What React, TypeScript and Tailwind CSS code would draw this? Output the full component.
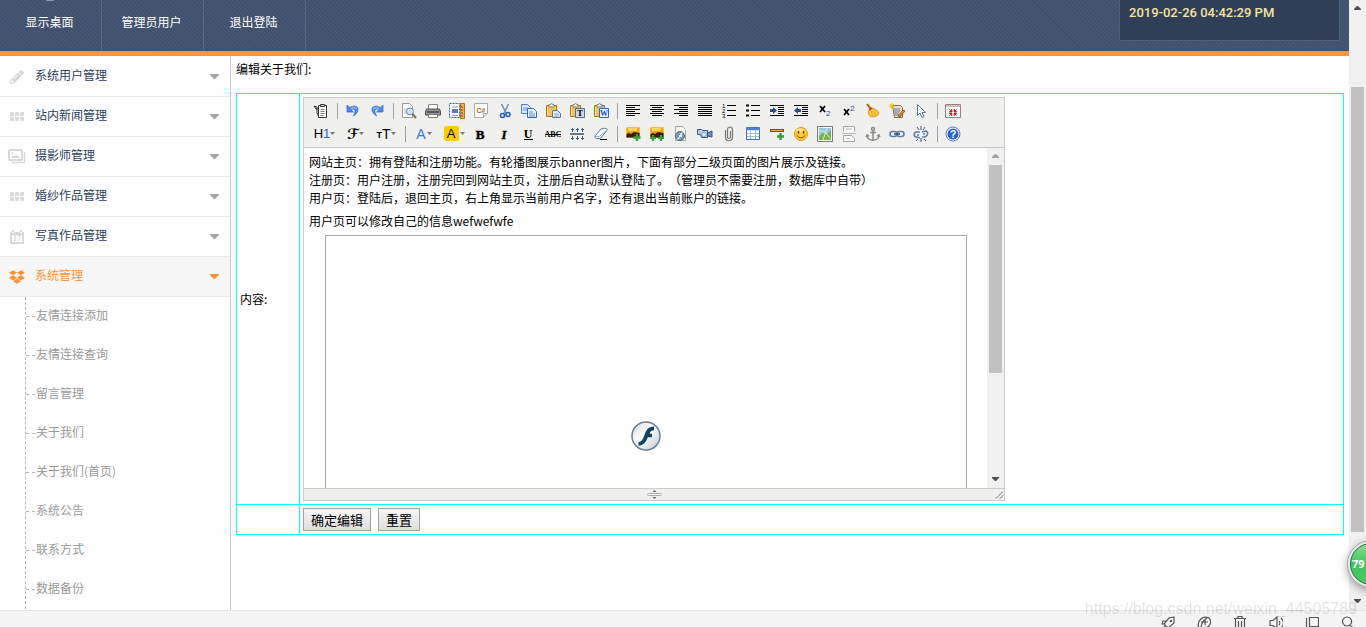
import React from 'react';
import clsx from 'clsx';
import { FaDropbox, FaPencilAlt } from 'react-icons/fa';

interface MenuItem {
  label: string;
  icon: React.ReactNode;
  active?: boolean;
}

interface ToolItem {
  name: string;
  label: string;
}

const gridIcon = (
  <svg width="14" height="10" viewBox="0 0 14 10" fill="currentColor">
    {[0, 5, 10].map((x) => (
      <React.Fragment key={x}>
        <rect x={x} y="0" width="4" height="4" rx="1" />
        <rect x={x} y="5" width="4" height="4" rx="1" />
      </React.Fragment>
    ))}
  </svg>
);

const photosIcon = (
  <svg width="18" height="15" viewBox="0 0 18 15" fill="none" stroke="currentColor" strokeWidth="2">
    <rect x="1" y="1" width="13" height="10" rx="1" />
    <path d="M16.5 3v10.5H4" strokeWidth="1.5" />
    <path d="M3 9l2-3 2 1 2-1 3 3z" fill="currentColor" stroke="none" />
    <circle cx="4.5" cy="4.2" r="1" fill="currentColor" stroke="none" />
  </svg>
);

const calendarIcon = (
  <svg width="14" height="14" viewBox="0 0 14 14">
    <path d="M0 2h2v1h2V2h6v1h2V2h2v12H0z" fill="currentColor" />
    <rect x="2" y="5" width="10" height="7" fill="#fff" />
    <path d="M3 0v2M11 0v2" stroke="currentColor" strokeWidth="2" />
    <text x="7" y="11" textAnchor="middle" fontSize="7" fontWeight="700" fill="currentColor">17</text>
  </svg>
);

const menu: MenuItem[] = [
  { label: '系统用户管理', icon: <FaPencilAlt size={14} /> },
  { label: '站内新闻管理', icon: gridIcon },
  { label: '摄影师管理', icon: photosIcon },
  { label: '婚纱作品管理', icon: gridIcon },
  { label: '写真作品管理', icon: calendarIcon },
  { label: '系统管理', icon: <FaDropbox size={16} />, active: true },
];

const subMenu = ['友情连接添加', '友情连接查询', '留言管理', '关于我们', '关于我们(首页)', '系统公告', '联系方式', '数据备份'];

const headerLinks = ['显示桌面', '管理员用户', '退出登陆'];

const lines = (rows: number[][]) => (
  <path d={rows.map(([y, x1, x2]) => `M${x1} ${y + 0.5}H${x2}`).join('')} stroke="#000" fill="none" />
);

const clipboard = (
  <>
    <path d="M1.5 2.5h10v11h-10z" fill="#f5c453" stroke="#a9791c" />
    <path d="M2.5 3.5v9" stroke="#ffe79a" />
    <path d="M4 3V1.5h1.5a1 1 0 0 1 2 0H9V4H4z" fill="#e8e8e8" stroke="#777" strokeWidth=".8" />
  </>
);

const photo = (
  <>
    <rect x="1" y="1" width="14" height="11" fill="#f6a01a" />
    <rect x="3" y="2" width="9" height="3" fill="#ffd65a" />
    <path d="M1 8l3-1 2 1 3-2 6 1v5H1z" fill="#3c1d00" />
    <rect x="1" y="1" width="14" height="11" fill="none" stroke="#fff3cf" strokeWidth=".7" />
  </>
);

const sheet = <path d="M2.5.5h7l3 3v11h-10z" fill="#fff" stroke="#a8a8a8" />;

const icons: Record<string, React.ReactNode> = {
  source: (
    <>
      <path d="M5.5 2.5h8v12h-8z" fill="#fff" stroke="#333" />
      <path d="M7.5 1.5h4v2h-4z" fill="#ddd" stroke="#333" />
      <path d="M7.5 6.5h4M7.5 8.5h4M7.5 10.5h4M7.5 12.5h3" stroke="#777" />
      <path d="M1 3l3 1v6l1.5 3M1 3l2 3h2" fill="none" stroke="#333" />
    </>
  ),
  undo: (
    <>
      <path d="M2 2v7h6.5L6 6.8c3-2 6 0 2.5 6.2C16 8 14 0 4.5 4.5z" fill="#4c88ee" stroke="#2a5fc4" strokeWidth=".7" />
      <path d="M6 5.5c3-1.3 5.5-.8 6.3 1" stroke="#a9c9ff" fill="none" />
    </>
  ),
  redo: (
    <>
      <path d="M14 2v7H7.5L10 6.8c-3-2-6 0-2.5 6.2C0 8 2 0 11.5 4.5z" fill="#4c8fee" stroke="#2a6cc4" strokeWidth=".7" />
      <path d="M10 5.5c-3-1.3-5.5-.8-6.3 1" stroke="#a9d0ff" fill="none" />
    </>
  ),
  preview: (
    <>
      <path d="M1.5.5h7l3 3v11h-10z" fill="#fff" stroke="#999" />
      <path d="M3 6h5M3 8h4M3 10h4" stroke="#c4c4c4" />
      <circle cx="9" cy="8.5" r="3.5" fill="#cfe3f5" stroke="#6b88aa" />
      <path d="M11.5 11l3.5 4" stroke="#8c7350" strokeWidth="2" />
    </>
  ),
  print: (
    <>
      <path d="M3.5 1.5h9v5h-9z" fill="#fff" stroke="#888" />
      <path d="M1.5 6h13l1 3v3h-15V9z" fill="#999" stroke="#4a4a4a" />
      <path d="M2 9h12" stroke="#444" strokeWidth="1.5" />
      <path d="M3.5 11.5h9v3h-9z" fill="#fff" stroke="#777" />
    </>
  ),
  template: (
    <>
      <path d="M.5.5h10v14H.5z" fill="#fff" stroke="#2b5fae" strokeDasharray="2 1" />
      <rect x="3" y="6" width="6" height="4" fill="#5b7fb5" />
      <path d="M3 4h6M3 12.5h6" stroke="#999" />
      <path d="M11.5.5h4v15h-4z" fill="#f0b040" stroke="#b0741a" />
      <path d="M12 4h2M12 7h2M12 10h2M12 13h2" stroke="#7a4d0c" />
    </>
  ),
  code: (
    <>
      <path d="M1.5.5h13v10l-4 4h-9z" fill="#fff" stroke="#aaa" />
      <path d="M14.5 10.5h-4v4" fill="#ddd" stroke="#aaa" />
      <text x="8" y="9.5" textAnchor="middle" fontSize="7" fontWeight="700" fill="#a8641c">C#</text>
    </>
  ),
  cut: (
    <>
      <path d="M4.5 1l4.5 9M11.5 1L7 10" stroke="#6f8fb5" strokeWidth="1.6" />
      <circle cx="5.5" cy="12.5" r="2" fill="none" stroke="#1f5fc0" strokeWidth="1.6" />
      <circle cx="11" cy="11.5" r="2" fill="none" stroke="#1f5fc0" strokeWidth="1.6" />
    </>
  ),
  copy: (
    <>
      <path d="M.5 1.5h6l3 3v6h-9z" fill="#dbe9fb" stroke="#4a80c8" />
      <path d="M2 5h5M2 7h5" stroke="#6c9bd8" />
      <path d="M6.5 5.5h6l3 3v6h-9z" fill="#e8f1fd" stroke="#2f6ab8" />
      <path d="M8 9h4M8 11h6M8 13h6" stroke="#5d8fd0" />
    </>
  ),
  paste: (
    <>
      {clipboard}
      <path d="M7.5 7.5h5l3 3v4h-8z" fill="#dde9f7" stroke="#5677a0" />
      <path d="M9 11h5M9 13h5" stroke="#8fa9c7" />
    </>
  ),
  plainpaste: (
    <>
      {clipboard}
      <path d="M6.5 5.5h9v9h-9z" fill="#cfdbe9" stroke="#5a6f8a" />
      <text x="11" y="13" textAnchor="middle" fontFamily="Liberation Serif" fontSize="9" fontWeight="700">T</text>
    </>
  ),
  wordpaste: (
    <>
      {clipboard}
      <path d="M6.5 5.5h9v9h-9z" fill="#eaf2fd" stroke="#3567ad" />
      <text x="11" y="13" textAnchor="middle" fontFamily="Liberation Serif" fontSize="8" fontWeight="700" fill="#1c4fa0">W</text>
    </>
  ),
  left: lines([[2, 1, 15], [4, 1, 10], [6, 1, 15], [8, 1, 10], [10, 1, 15], [12, 1, 10]]),
  center: lines([[2, 1, 15], [4, 3, 13], [6, 1, 15], [8, 3, 13], [10, 1, 15], [12, 3, 13]]),
  right: lines([[2, 1, 15], [4, 6, 15], [6, 1, 15], [8, 6, 15], [10, 1, 15], [12, 6, 15]]),
  full: lines([[2, 1, 15], [4, 1, 15], [6, 1, 15], [8, 1, 15], [10, 1, 15], [12, 1, 15]]),
  ordered: (
    <>
      {lines([[2, 6, 15], [7, 6, 15], [12, 6, 15]])}
      <g fontSize="6" fontFamily="Liberation Sans" fill="#000">
        <text x="1" y="5">1</text>
        <text x="1" y="10">2</text>
        <text x="1" y="15">3</text>
      </g>
    </>
  ),
  unordered: (
    <>
      {lines([[2, 6, 15], [7, 6, 15], [12, 6, 15]])}
      <path d="M1 1.5h3v2H1zM1 6.5h3v2H1zM1 11.5h3v2H1z" />
    </>
  ),
  indent: (
    <>
      {lines([[2, 1, 15], [4, 9, 15], [6, 9, 15], [8, 9, 15], [10, 9, 15], [12, 1, 15]])}
      <path d="M1 6h3V4l4 3.5L4 11V9H1z" fill="#294b86" />
    </>
  ),
  outdent: (
    <>
      {lines([[2, 1, 15], [4, 9, 15], [6, 9, 15], [8, 9, 15], [10, 9, 15], [12, 1, 15]])}
      <path d="M8 6H5V4L1 7.5 5 11V9h3z" fill="#294b86" />
    </>
  ),
  subscript: (
    <>
      <path d="M3 3l5 6M8 3L3 9" stroke="#000" strokeWidth="1.8" />
      <text x="9" y="13" fontSize="8" fontFamily="Liberation Sans" fill="#294b86">2</text>
    </>
  ),
  superscript: (
    <>
      <path d="M3 6l5 6M8 6l-5 6" stroke="#000" strokeWidth="1.8" />
      <text x="9" y="8" fontSize="8" fontFamily="Liberation Sans" fill="#294b86">2</text>
    </>
  ),
  clear: (
    <>
      <path d="M2 1l4 5" stroke="#a45a12" strokeWidth="2" />
      <path d="M4 7l3-2c4 1 6 3 7 5-1 3-4 4-8 4-3-2-3-5-2-7z" fill="#fbc736" stroke="#d18a10" strokeWidth=".8" />
      <path d="M4 7l3-2" stroke="#c02a10" strokeWidth="1.5" />
      <path d="M6 8l2 5M8 8l3 4" stroke="#dc9a1c" strokeWidth=".8" />
    </>
  ),
  quickformat: (
    <>
      <path d="M3.5 2.5h8l2 2v10h-8z" fill="#f3dfc0" stroke="#8b6a45" />
      <path d="M5 6h6M5 8h6M5 10h5M6 12h4" stroke="#5a79a8" />
      <path d="M3 0v6M0 3h6M1 1l4 4M5 1L1 5" stroke="#f5b800" />
      <path d="M9 13l5-6 2 1-5 6z" fill="#e28b2b" stroke="#713d12" strokeWidth=".7" />
    </>
  ),
  selectall: <path d="M4.5 1.5v11l2.5-2.500 2 4.500 2-1-2-4h3.500z" fill="#fff" stroke="#547399" />,
  fullscreen: (
    <>
      <path d="M.5 1.5h15v13H.5z" fill="#fff" stroke="#a08080" />
      <path d="M1 3h14" stroke="#c9bcbc" strokeWidth="2" />
      <path d="M4 6l3 3M7 6v3H4zM12 6L9 9M9 6v3h3zM4 13l3-3M4 10h3v3zM12 13l-3-3M12 10H9v3z" fill="#d4202a" stroke="#d4202a" strokeWidth=".6" />
    </>
  ),
  bold: <text x="7" y="13" textAnchor="middle" fontFamily="Liberation Serif" fontSize="13" fontWeight="700" stroke="#000" strokeWidth=".5">B</text>,
  italic: <text x="7" y="13" textAnchor="middle" fontFamily="Liberation Serif" fontSize="13" fontWeight="700" fontStyle="italic" stroke="#000" strokeWidth=".4">I</text>,
  underline: (
    <>
      <text x="7" y="12" textAnchor="middle" fontFamily="Liberation Serif" fontSize="12" fontWeight="700">U</text>
      <path d="M3 13.5h9" stroke="#000" />
    </>
  ),
  strike: (
    <>
      <text x="8" y="11" textAnchor="middle" fontFamily="Liberation Serif" fontSize="8" fontWeight="700">ABC</text>
      <path d="M0 8.5h16" stroke="#000" />
    </>
  ),
  lineheight: (
    <>
      <path d="M1 8h14" stroke="#777" strokeWidth="2" />
      <path d="M3.500 2v4M8.500 2v4M13.500 2v4M3.500 10v4M8.500 10v4M13.500 10v4M2 3.500h3M7 3.500h3M12 3.500h3M2 12.500h3M7 12.500h3M12 12.500h3" stroke="#3d5a80" />
    </>
  ),
  eraser: (
    <>
      <path d="M2 10l6-7c2-1 7-1 6 1l-6 8c-2 1-7 1-6-2z" fill="#fff" stroke="#54719b" />
      <path d="M2 10c2 1 4 1 6-1l6-5" fill="none" stroke="#8ca4c4" />
      <path d="M7 13.5h7" stroke="#000" />
    </>
  ),
  image: (
    <>
      {photo}
      <path d="M12 8v7M8.5 11.5h7" stroke="#2fa52f" strokeWidth="2.4" />
    </>
  ),
  multiimage: (
    <>
      {photo}
      <path d="M4 9v6M1 12h6M12 9v6M9 12h6" stroke="#2fa52f" strokeWidth="2.2" />
    </>
  ),
  flash: (
    <>
      {sheet}
      <circle cx="7" cy="10" r="4.5" fill="#7c99b8" stroke="#48698d" />
      <path d="M9.5 7C7 7 7 13 4.5 13M6 10h3" fill="none" stroke="#fff" strokeWidth="1.4" />
    </>
  ),
  media: (
    <>
      <path d="M.5 3.500h4l1 1h5v7h-6l-1-3h-3z" fill="#b9cde2" stroke="#34557f" />
      <path d="M10.500 7l4.500-2v6l-4.500-1z" fill="#6f90b8" stroke="#34557f" />
      <path d="M5 7h4v3H5z" fill="#fff" stroke="#5c7fa9" strokeWidth=".6" />
    </>
  ),
  file: <path d="M4.500 4v7c0 5 7 5 7 0V4c0-4-5-4-5 0v7c0 2 3 2 3 0V5" fill="none" stroke="#777" strokeWidth="1.2" />,
  table: (
    <>
      <path d="M1.5 1.5h13v12h-13z" fill="#fff" stroke="#3d6fc0" />
      <path d="M1 3h14" stroke="#4c80d6" strokeWidth="2.5" />
      <path d="M2 7.5h12M2 10.5h12M5.5 4v9M10.5 4v9" stroke="#9ebce8" />
    </>
  ),
  hr: (
    <>
      <path d="M1 4.5h14" stroke="#7b4a12" strokeWidth="3" />
      <path d="M2 4.5h12" stroke="#e9b15c" />
      <path d="M11.5 7v7M8 10.500h7" stroke="#2fa52f" strokeWidth="2.4" />
    </>
  ),
  emoticons: (
    <>
      <circle cx="8" cy="8" r="6.5" fill="#ffc928" stroke="#e89a10" />
      <ellipse cx="7" cy="4.5" rx="4" ry="2" fill="#ffe88a" />
      <path d="M5.5 5v2.5M10.5 5v2.5" stroke="#5a3200" strokeWidth="1.4" />
      <path d="M4 9.5c2 3 6 3 8 0" fill="none" stroke="#7d4300" />
    </>
  ),
  baidumap: (
    <>
      <path d="M.5.5h15v15H.5z" fill="#fff" stroke="#777" />
      <path d="M2 2h12v12H2z" fill="#8fc9ec" />
      <path d="M2 10l4-3 3 2 5-5v10H2z" fill="#71b648" />
      <path d="M2 5h5l7 8M10 2L6 14" fill="none" stroke="#d9f0a7" />
    </>
  ),
  pagebreak: (
    <>
      <path d="M2.5 5.500V.5h11v5M2.5 15.500v-6h8l3 3v3z" fill="#fff" stroke="#a4a4a4" />
      <path d="M1 7.5h14M5 3h6M5 12.500h4" stroke="#b8b8b8" />
    </>
  ),
  anchor: (
    <g fill="none" stroke="#8c8c8c" strokeWidth="1.5">
      <circle cx="8" cy="3" r="1.5" />
      <path d="M8 5v9M5 6.5h6M2 9c0 7 12 7 12 0M1 11l1-2 2 1M12 10l2-1 1 2" />
    </g>
  ),
  link: (
    <g fill="none" stroke="#607da6" strokeWidth="1.6">
      <rect x="1" y="5.5" width="7" height="5" rx="2.5" />
      <rect x="8" y="5.5" width="7" height="5" rx="2.5" />
      <path d="M5 8h6" stroke="#36547e" />
    </g>
  ),
  unlink: (
    <g fill="none" stroke="#607da6" strokeWidth="1.6">
      <path d="M7 6H3.5c-3 0-3 5 0 5L7 12M9 6l3-1c4 0 3 5 0 6H9M4 9h2M10 8h2" />
      <path d="M8 0v4M4 1l2 3M12 1l-2 3M8 12v4M5 13l-2 2M11 13l2 2" stroke="#36547e" strokeWidth="1" />
    </g>
  ),
  about: (
    <>
      <circle cx="8" cy="8" r="7" fill="#fff" stroke="#4d79c9" />
      <circle cx="8" cy="8" r="5.5" fill="#2462d8" />
      <text x="8" y="12" textAnchor="middle" fontFamily="Liberation Sans" fontSize="11" fontWeight="700" fill="#fff">?</text>
    </>
  ),
};

// one inner array per group, groups are split by a separator
const toolbarTop: ToolItem[][] = [
  [{ name: 'source', label: 'HTML代码' }],
  [
    { name: 'undo', label: '后退' },
    { name: 'redo', label: '前进' },
  ],
  [
    { name: 'preview', label: '预览' },
    { name: 'print', label: '打印' },
    { name: 'template', label: '插入模板' },
    { name: 'code', label: '插入程序代码' },
    { name: 'cut', label: '剪切' },
    { name: 'copy', label: '复制' },
    { name: 'paste', label: '粘贴' },
    { name: 'plainpaste', label: '粘贴为无格式文本' },
    { name: 'wordpaste', label: '从Word粘贴' },
  ],
  [
    { name: 'left', label: '左对齐' },
    { name: 'center', label: '居中' },
    { name: 'right', label: '右对齐' },
    { name: 'full', label: '两端对齐' },
    { name: 'ordered', label: '编号' },
    { name: 'unordered', label: '项目符号' },
    { name: 'indent', label: '增加缩进' },
    { name: 'outdent', label: '减少缩进' },
    { name: 'subscript', label: '下标' },
    { name: 'superscript', label: '上标' },
    { name: 'clear', label: '清理HTML代码' },
    { name: 'quickformat', label: '一键排版' },
    { name: 'selectall', label: '全选' },
  ],
  [{ name: 'fullscreen', label: '全屏显示' }],
];

const toolbarBottom: ToolItem[][] = [
  [
    { name: 'bold', label: '粗体' },
    { name: 'italic', label: '斜体' },
    { name: 'underline', label: '下划线' },
    { name: 'strike', label: '删除线' },
    { name: 'lineheight', label: '行距' },
    { name: 'eraser', label: '删除格式' },
  ],
  [
    { name: 'image', label: '图片' },
    { name: 'multiimage', label: '批量图片上传' },
    { name: 'flash', label: 'Flash' },
    { name: 'media', label: '视音频' },
    { name: 'file', label: '插入文件' },
    { name: 'table', label: '表格' },
    { name: 'hr', label: '插入横线' },
    { name: 'emoticons', label: '插入表情' },
    { name: 'baidumap', label: '百度地图' },
    { name: 'pagebreak', label: '插入分页符' },
    { name: 'anchor', label: '锚点' },
    { name: 'link', label: '超级链接' },
    { name: 'unlink', label: '取消超级链接' },
  ],
  [{ name: 'about', label: '关于' }],
];

const Separator = () => (
  <span className="flex w-2 justify-center">
    <span className="h-4 w-px bg-[#a0a0a0]" />
  </span>
);

const ToolGroups: React.FC<{ groups: ToolItem[][] }> = ({ groups }) => (
  <>
    {groups.map((group, i) => (
      <React.Fragment key={group[0].name}>
        {i > 0 && <Separator />}
        {group.map((item) => (
          <button key={item.name} type="button" aria-label={item.label} className="flex w-6 justify-center">
            <svg width="16" height="16" viewBox="0 0 16 16">
              {icons[item.name]}
            </svg>
          </button>
        ))}
      </React.Fragment>
    ))}
  </>
);

const DropTool: React.FC<{ label: string; wide?: boolean; children: React.ReactNode }> = ({ label, wide, children }) => (
  <button
    type="button"
    aria-label={label}
    className={clsx('flex items-center justify-center leading-4', wide ? 'w-[31px]' : 'w-[30px]')}
  >
    {children}
    <svg width="5" height="3" viewBox="0 0 5 3" fill="#777">
      <path d="M0 0h5L2.5 3z" />
    </svg>
  </button>
);

const Toolbar = () => (
  <div className="border-b border-[#ccc] bg-[#f0f0ee] px-[5px] pt-px pb-[2px] font-['Liberation_Sans',sans-serif]">
    <div className="flex h-[23px] items-center">
      <ToolGroups groups={toolbarTop} />
    </div>
    <div className="flex h-[23px] items-center">
      <DropTool label="段落" wide>
        <span className="text-[13px]">H<span className="text-[#2565e0]">1</span></span>
      </DropTool>
      <DropTool label="字体" wide>
        <span className="font-['DejaVu_Serif','DejaVu_Sans',serif] text-[14px] font-bold">ℱ</span>
      </DropTool>
      <DropTool label="文字大小">
        <span className="pt-0.5 text-[9px] font-bold">T</span>
        <span className="text-[14px]">T</span>
      </DropTool>
      <Separator />
      <DropTool label="文字颜色">
        <span className="mr-px text-[14px] text-[#2c7ae8]">A</span>
      </DropTool>
      <DropTool label="文字背景">
        <span className="mr-px h-[15px] w-[15px] rounded-xs bg-[#fc0] text-center text-[13px] leading-[15px]">A</span>
      </DropTool>
      <ToolGroups groups={toolbarBottom} />
    </div>
  </div>
);

interface ScrollbarProps {
  before: number;
  thumb: number;
  after: number;
  atTop?: boolean;
}

const Scrollbar: React.FC<ScrollbarProps> = ({ before, thumb, after, atTop }) => (
  <div className="flex w-[17px] shrink-0 flex-col items-center bg-[#f1f1f1]">
    <svg width="17" height="17" viewBox="0 0 17 17" className="shrink-0" fill={atTop ? '#a3a3a3' : '#505050'}>
      <path d="M5 10h7v-1L9 6H8L5 9z" />
    </svg>
    <div className="flex min-h-0 flex-1 flex-col">
      <span style={{ flexGrow: before }} />
      <span className="w-[13px] bg-[#c1c1c1]" style={{ flexGrow: thumb }} />
      <span style={{ flexGrow: after }} />
    </div>
    <svg width="17" height="17" viewBox="0 0 17 17" className="shrink-0" fill="#505050">
      <path d="M5 6h7v1l-3 3H8L5 7z" />
    </svg>
  </div>
);

const Header = () => (
  <header className="flex h-14 shrink-0 border-b-[5px] border-[#ff9535] bg-[#42536f] bg-[repeating-linear-gradient(45deg,#3f506b_0px,#3f506b_1px,#485a77_2px,#42536f_3px)]">
    <nav className="flex">
      {headerLinks.map((label, i) => (
        <a
          key={label}
          href="#"
          className="flex w-[102px] flex-col items-center border-r border-[#566884] pr-0.5 text-xs text-white"
        >
          <span className={clsx('h-px rounded-full', i === 0 ? 'w-2 bg-[#8d99ad]' : 'w-1')} />
          <span className="pt-[11px] leading-5">{label}</span>
        </a>
      ))}
    </nav>
    <div className="mr-[9px] ml-auto h-[41px] w-[221px] rounded-b-xs border-x border-b border-[#4c607f] bg-[#303f57] px-[9px] pt-1 font-['Roboto',sans-serif] text-[13px] leading-[18px] font-medium text-[#f5e3a1]">
      2019-02-26 04:42:29 PM
    </div>
  </header>
);

const Sidebar = () => (
  <nav className="w-[231px] shrink-0 border-r border-[#ccc] bg-white pt-px text-xs">
    {menu.map((item) => (
      <a
        key={item.label}
        href="#"
        className={clsx(
          'flex h-10 items-center border-b border-[#ebebeb] pr-[11px]',
          item.active ? 'bg-[#f7f7f7] text-[#ff9234]' : 'text-[#2b3d5c]',
        )}
      >
        <span className={clsx('flex w-[35px] justify-center pr-[2px]', !item.active && 'text-[#d8d8d8]')}>{item.icon}</span>
        <span className="pb-[3px]">{item.label}</span>
        <svg
          width="9"
          height="5"
          viewBox="0 0 9 5"
          fill="currentColor"
          className={clsx('ml-auto', !item.active && 'text-[#a5a5a5]')}
        >
          <path d="M0 0h9v1L5 5H4L0 1z" />
        </svg>
      </a>
    ))}
    <ul className="ml-[25px] border-l border-dashed border-[#bbb]">
      {subMenu.map((label) => (
        <li key={label}>
          <a href="#" className="flex h-[39px] items-center text-[#999]">
            <span className="mr-px w-[9px] border-t border-dashed border-[#bbb]" />
            <span className="pb-[3px]">{label}</span>
          </a>
        </li>
      ))}
    </ul>
  </nav>
);

const FlashLogo = () => (
  <svg width="30" height="30" viewBox="0 0 30 30">
    <defs>
      <linearGradient id="flashBg" x1="0" y1="0" x2="1" y2="1">
        <stop offset="0" stopColor="#cfd6df" />
        <stop offset=".45" stopColor="#fff" />
        <stop offset="1" stopColor="#bcc7d4" />
      </linearGradient>
    </defs>
    <circle cx="15" cy="15" r="14" fill="url(#flashBg)" stroke="#6c7f98" strokeWidth="1.5" />
    <path
      d="M23 5.5v3.700c-2.500 0-3.400 1-4.500 3.500H21v3.600h-4.200c-2 5-4.300 8.300-9.300 8.300v-3.700c3.500 0 4.500-3 6-7 1.700-4.700 3.500-8.400 9.500-8.400z"
      fill="#0f4468"
    />
  </svg>
);

const Editor = () => (
  <div className="w-[702px] max-w-full border border-[#ccc] bg-white">
    <Toolbar />
    <div className="flex h-[340px]">
      <div
        contentEditable
        suppressContentEditableWarning
        spellCheck={false}
        role="textbox"
        aria-labelledby="content-label"
        className="min-w-0 flex-1 overflow-hidden p-[5px] leading-[18px] [text-spacing-trim:space-all]"
      >
        网站主页：拥有登陆和注册功能。有轮播图展示banner图片，下面有部分二级页面的图片展示及链接。
        <br />
        注册页：用户注册，注册完回到网站主页，注册后自动默认登陆了。（管理员不需要注册，数据库中自带）
        <br />
        用户页：登陆后，退回主页，右上角显示当前用户名字，还有退出当前账户的链接。
        <p className="my-[5px]">用户页可以修改自己的信息wefwefwfe</p>
        <div className="mr-[15px] ml-4 flex h-[402px] items-center justify-center border border-[#a9a9a9]">
          <FlashLogo />
        </div>
      </div>
      <Scrollbar before={0} thumb={208} after={98} atTop />
    </div>
    <div className="flex h-3 items-center border-t border-[#ccc] bg-[#f0f0ee]">
      <span className="w-[9px]" />
      <svg width="15" height="9" viewBox="0 0 15 9" className="mx-auto">
        <path d="M5.5 2l2-2 2 2zM5.5 7l2 2 2-2z" fill="#666" />
        <rect x=".5" y="3.5" width="14" height="2" rx="1" fill="#fff" stroke="#aaa" />
      </svg>
      <svg width="9" height="9" viewBox="0 0 9 9" stroke="#555" fill="none">
        <path d="M1 8.5l7-7M5 8.500l3.500-3.500" strokeDasharray="2 .5" />
      </svg>
    </div>
  </div>
);

const formButton =
  'h-[23px] border border-[#a0a0a0] bg-linear-to-b from-[#f6f6f6] to-[#dedede] px-[7px] text-[13px] leading-5 text-black';

const cell = 'border border-solid border-[#00ffff] p-[3px]';

const EditForm = () => (
  <form className="min-w-0 flex-1 px-[5px] text-xs text-black" onSubmit={(e) => e.preventDefault()}>
    <h1 className="pt-1 pb-[15px] leading-[18px]">编辑关于我们:</h1>
    <table className="w-full border-collapse border border-solid border-[#00ffff]">
      <tbody>
        <tr>
          <td id="content-label" className={clsx(cell, 'w-[63px]')}>内容:</td>
          <td className={cell}>
            <Editor />
          </td>
        </tr>
        <tr>
          <td className={cell} />
          <td className={cell}>
            <div className="flex gap-[7px]">
              <button type="submit" className={formButton}>确定编辑</button>
              <button type="reset" className={formButton}>重置</button>
            </div>
          </td>
        </tr>
      </tbody>
    </table>
  </form>
);

const statusIcons: { label: string; icon: React.ReactNode }[] = [
  { label: '加速', icon: <path d="M13 1L8 2 3 8l4 4 6-5zM5 5H2L1 8h2M9 10v3l-3 1v-2M4 10l-3 3M9.5 4.500h1v1h-1z" /> },
  { label: '下载', icon: <path d="M2 12C-1 5 6-1 12 2c4 4 0 10-5 10M4 12c0-5 3-8 6-10M4 6h7M8 3v6" /> },
  { label: '清理', icon: <path d="M1 2.5h12M5 2V.5h4V2M2.5 3v11h9V3M5.5 5v7M8.5 5v7" /> },
  { label: '声音', icon: <path d="M1 4.5h3L8 1v12L4 9.5H1zM10 5c1 1 1 3 0 4M12 2c3 3 3 7 0 10" /> },
  { label: '窗口', icon: <path d="M1.5 2v10M4.5 1.5h9v9h-9z" /> },
  { label: '查找', icon: <path d="M6 1a4.5 4.5 0 1 0 .1 0M9.5 9.5L14 14" /> },
];

const StatusBar = () => (
  <footer className="flex h-[17px] shrink-0 items-start justify-end overflow-hidden border-t border-[#e4e4e4] bg-[#f4f4f4] pt-[5px]">
    {statusIcons.map((item) => (
      <button key={item.label} type="button" aria-label={item.label} className="flex w-9 justify-center">
        <svg width="14" height="14" viewBox="0 0 14 14" fill="none" stroke="#555" strokeWidth="1.2">
          {item.icon}
        </svg>
      </button>
    ))}
  </footer>
);

export default function App() {
  return (
    <div className="relative flex h-screen flex-col overflow-hidden bg-white font-['Noto_Sans_CJK_SC',sans-serif]">
      <div className="flex min-h-0 flex-1">
        <div className="flex min-w-0 flex-1 flex-col">
          <Header />
          <div className="flex min-h-0 flex-1 overflow-hidden">
            <Sidebar />
            <EditForm />
          </div>
        </div>
        <Scrollbar before={70} thumb={445} after={61} />
      </div>
      <StatusBar />

      {/* floating speed ball, half outside the window */}
      <div className="absolute right-[-29px] bottom-[39px] h-12 w-12 rounded-full border border-[#aaa] bg-[#e9e9e9] p-[2px] shadow-[0_3px_8px_rgba(0,0,0,0.35)]">
        <div className="flex h-full items-center rounded-full border border-[#0e7a4c] bg-linear-to-b from-[#86e08c] via-[#3fc25a] to-[#4bcb62] pl-px font-['Noto_Sans',sans-serif] text-[11px] font-bold text-white">
          79
        </div>
      </div>
      <div className="pointer-events-none absolute right-[9px] bottom-2 font-['Liberation_Sans',sans-serif] text-base leading-5 text-black/12">
        https://blog.csdn.net/weixin_44505789
      </div>
    </div>
  );
}
